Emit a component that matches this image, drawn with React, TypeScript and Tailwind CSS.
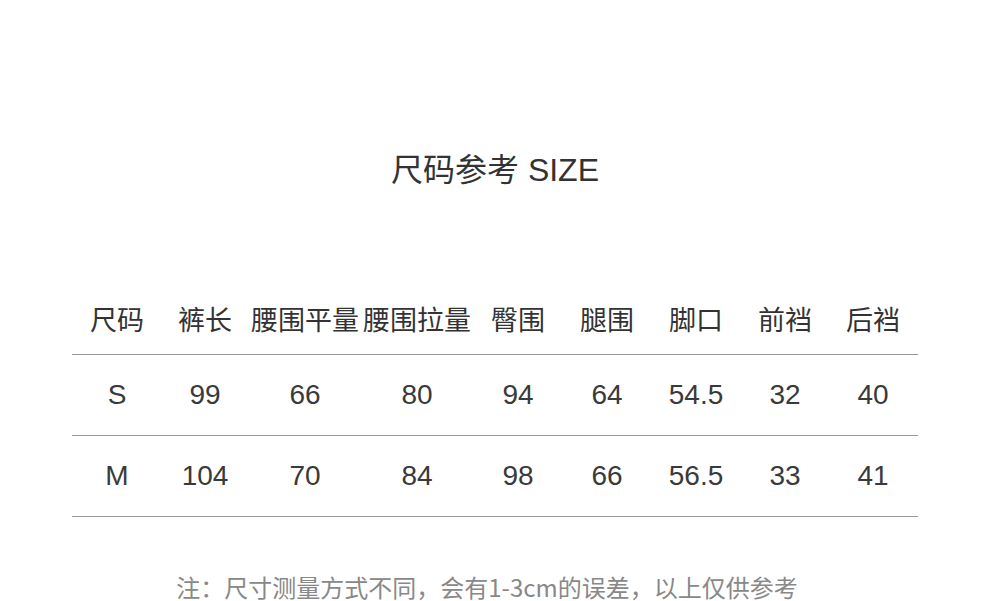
import React from "react";

const headers = ["尺码", "裤长", "腰围平量", "腰围拉量", "臀围", "腿围", "脚口", "前裆", "后裆"];

const rows = [
  ["S", "99", "66", "80", "94", "64", "54.5", "32", "40"],
  ["M", "104", "70", "84", "98", "66", "56.5", "33", "41"],
];

const cjk = "font-['Liberation_Sans','Noto_Sans_CJK_SC',sans-serif]";

const App: React.FC = () => {
  return (
    <div className={`w-[990px] h-[601px] overflow-hidden bg-white text-[#333] ${cjk}`}>
      <h1 className="pt-[146px] text-center text-[32px] leading-[48px] font-normal">尺码参考 SIZE</h1>

      <div className="mx-[72px] mt-[94px]">
        <div className="grid grid-cols-[90px_86px_114px_110px_92px_86px_92px_86px_90px] h-[67px] items-center border-b border-[#999] text-[27px] text-[#333]">
          {headers.map((h, idx) => (
            <div key={idx} className="text-center whitespace-nowrap">
              {h}
            </div>
          ))}
        </div>
        {rows.map((row) => (
          <div
            key={row[0]}
            className="grid grid-cols-[90px_86px_114px_110px_92px_86px_92px_86px_90px] h-[81px] items-center border-b border-[#999] text-[28px] text-[#3a3a3a]"
          >
            {row.map((cell, idx) => (
              <div key={idx} className="text-center">
                {cell}
              </div>
            ))}
          </div>
        ))}
      </div>

      <p className="mt-[52px] pr-[16px] text-center text-[24px] leading-[36px] text-[#888] font-['Noto_Sans_CJK_SC',sans-serif]">
        注：尺寸测量方式不同，会有1-3cm的误差，以上仅供参考
      </p>
    </div>
  );
};

export default App;
